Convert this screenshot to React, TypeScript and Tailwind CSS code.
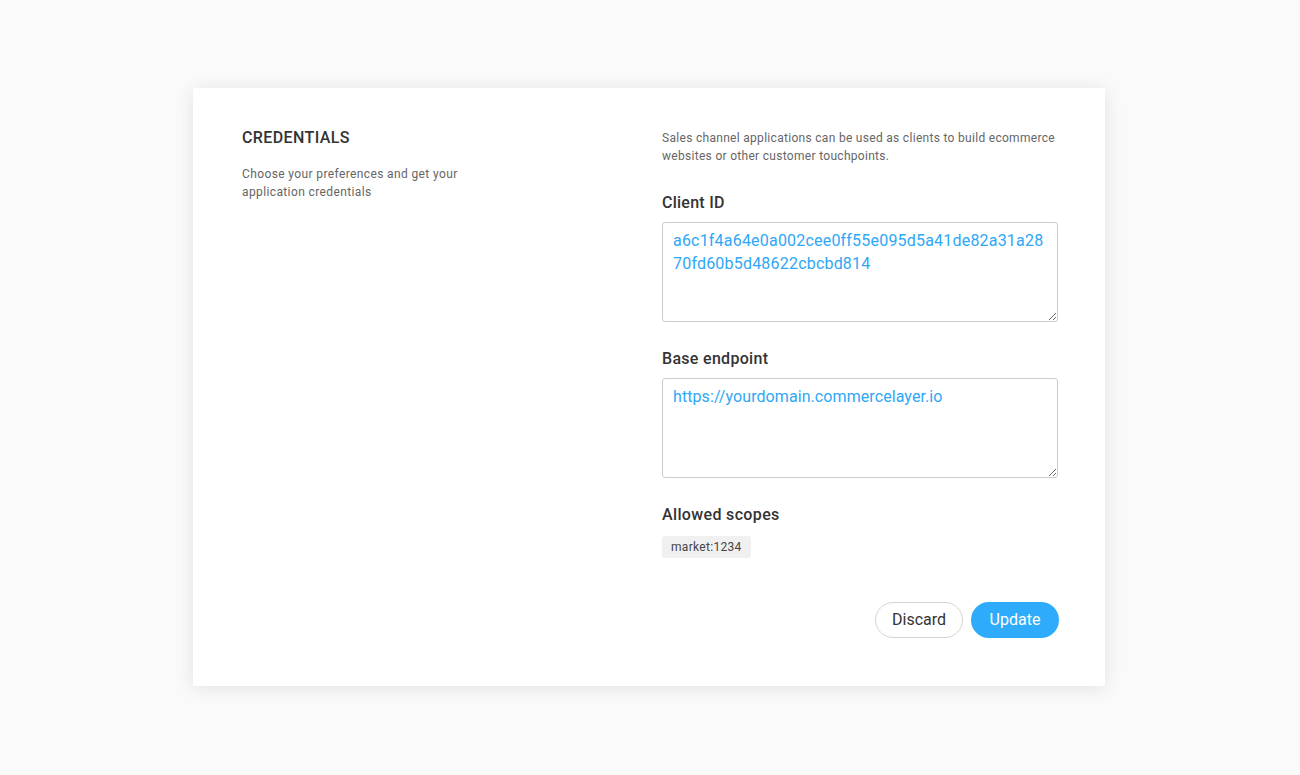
export default function App() {
  return (
    <main className="min-h-screen bg-[#fafafa] pt-[88px] font-['Roboto',sans-serif]">
      <div className="ml-[193px] flex w-[912px] justify-between bg-white pl-[49px] pr-[47px] pt-[41px] pb-[48px] shadow-[0_2px_18px_rgba(0,0,0,0.1)]">
        {/* Left: section heading */}
        <div className="w-[250px]">
          <h1 className="text-[16px] font-medium leading-[18px] tracking-[0.4px] text-[#333]">CREDENTIALS</h1>
          <p className="mt-[18px] text-[12px] leading-[18px] tracking-[0.38px] text-[#666]">
            Choose your preferences and get your application credentials
          </p>
        </div>

        {/* Right: form */}
        <div className="w-[396px]">
          <p className="text-[12px] leading-[18px] tracking-[0.3px] text-[#666]">
            Sales channel applications can be used as clients to build ecommerce websites or other customer touchpoints.
          </p>

          <label className="mt-[26px] block text-[16px] font-medium leading-[24px] tracking-[0.25px] text-[#333]">Client ID</label>
          <textarea
            className="mt-[7px] block h-[100px] w-full rounded-[3px] border border-[#cccccc] px-[10px] py-[6px] text-[16px] leading-[23px] tracking-[0.2px] text-[#2ea7f6] outline-none break-all"
            defaultValue="a6c1f4a64e0a002cee0ff55e095d5a41de82a31a2870fd60b5d48622cbcbd814"
          />

          <label className="mt-[25px] block text-[16px] font-medium leading-[24px] tracking-[0.3px] text-[#333]">Base endpoint</label>
          <textarea
            className="mt-[7px] block h-[100px] w-full rounded-[3px] border border-[#cccccc] px-[10px] py-[6px] text-[16px] leading-[23px] tracking-[0.08px] text-[#2ea7f6] outline-none"
            defaultValue="https://yourdomain.commercelayer.io"
          />

          <label className="mt-[25px] block text-[16px] font-medium leading-[24px] tracking-[0.35px] text-[#333]">Allowed scopes</label>
          <div className="mt-[9px] flex">
            <span className="rounded-[3px] bg-[#f0f0f0] px-[9px] text-[12px] leading-[22px] tracking-[0.3px] text-[#444]">market:1234</span>
          </div>

          <div className="-mr-px mt-[44px] flex justify-end gap-[8px]">
            <button className="h-[36px] w-[88px] rounded-full border border-[#d4d4d4] bg-white text-[16px] text-[#333]">
              Discard
            </button>
            <button className="h-[36px] w-[88px] rounded-full bg-[#2eabfa] text-[16px] text-white">
              Update
            </button>
          </div>
        </div>
      </div>
    </main>
  )
}
